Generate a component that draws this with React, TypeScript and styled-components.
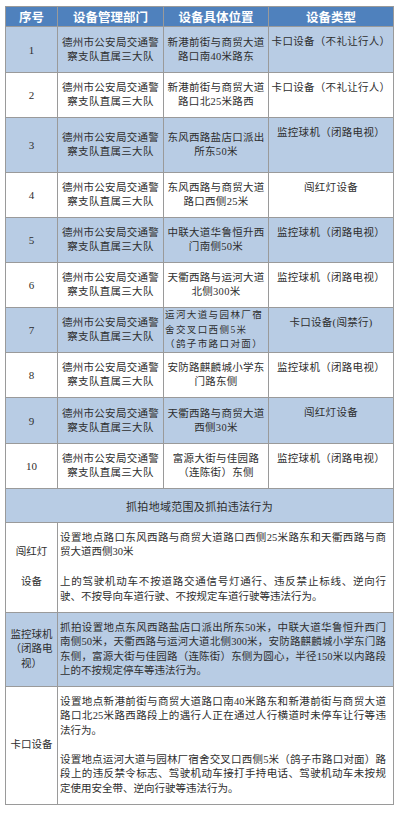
import React from 'react';
import styled, { createGlobalStyle } from 'styled-components';

const GlobalStyle = createGlobalStyle`
  html, body {
    margin: 0;
    padding: 0;
    background: #ffffff;
  }
`;

const Page = styled.div`
  padding: 6px 0 0 5px;
  width: 400px;
  box-sizing: border-box;
`;

const Table = styled.table`
  width: 388px;
  border-collapse: collapse;
  table-layout: fixed;
  font-family: "Liberation Serif", "Noto Sans CJK SC", serif;
  font-size: 10.5px;
  color: #2e2e2e;
  border: 1px solid #9a9a9a;
`;

const Col = styled.col<{ $w: number }>`
  width: ${p => p.$w}px;
`;

const HeadCell = styled.th`
  background: #4f81bd;
  color: #ffffff;
  font-family: "Noto Sans CJK SC", sans-serif;
  font-weight: 700;
  font-size: 12.5px;
  height: 19px;
  line-height: 18px;
  padding: 0;
  border: 1px solid #9a9a9a;
  text-align: center;
`;

const Row = styled.tr<{ $h: number; $shade: boolean }>`
  height: ${p => p.$h}px;
  background: ${p => (p.$shade ? '#b8cce4' : '#ffffff')};
`;

const Cell = styled.td<{ $top?: boolean }>`
  border: 1px solid #9a9a9a;
  padding: ${p => (p.$top ? '8px 0 0' : '0')};
  vertical-align: ${p => (p.$top ? 'top' : 'middle')};
  text-align: center;
  letter-spacing: 0.3px;
  white-space: nowrap;
  overflow: hidden;
`;

const NumCell = styled(Cell)`
  font-size: 11px;
  letter-spacing: 0;
`;

const CellLine = styled.div<{ $h: number }>`
  height: ${p => p.$h}px;
  line-height: ${p => p.$h}px;
`;

const TightText = styled.div`
  text-align: left;
  padding-left: 1px;
  font-size: 9.5px;
  letter-spacing: 1.4px;
`;

const Section = styled.td`
  border: 1px solid #9a9a9a;
  height: 33px;
  text-align: center;
  vertical-align: middle;
  padding: 0;
  font-size: 11px;
  letter-spacing: 0.3px;
`;

const SideCell = styled.td`
  border: 1px solid #9a9a9a;
  text-align: center;
  vertical-align: middle;
  padding: 0;
  font-size: 10.5px;
`;

const BodyCell = styled.td`
  border: 1px solid #9a9a9a;
  vertical-align: middle;
  padding: 0 7px 0 2px;
  font-size: 10.5px;
`;

const Line = styled.div<{ $full?: boolean; $h: number }>`
  height: ${p => p.$h}px;
  line-height: ${p => p.$h}px;
  text-align: ${p => (p.$full ? 'justify' : 'left')};
  text-align-last: ${p => (p.$full ? 'justify' : 'left')};
  white-space: nowrap;
`;

type Item = {
  no: string;
  loc: string[];
  type: string;
  h: number;
  tight?: boolean;
};

const items: Item[] = [
  { no: '1', loc: ['新港前街与商贸大道', '路口南40米路东'], type: '卡口设备（不礼让行人）', h: 46 },
  { no: '2', loc: ['新港前街与商贸大道', '路口北25米路西'], type: '卡口设备（不礼让行人）', h: 45 },
  { no: '3', loc: ['东风西路盐店口派出', '所东50米'], type: '监控球机（闭路电视）', h: 55 },
  { no: '4', loc: ['东风西路与商贸大道', '路口西侧25米'], type: '闯红灯设备', h: 45 },
  { no: '5', loc: ['中联大道华鲁恒升西', '门南侧50米'], type: '监控球机（闭路电视）', h: 45 },
  { no: '6', loc: ['天衢西路与运河大道', '北侧300米'], type: '监控球机（闭路电视）', h: 45 },
  {
    no: '7',
    loc: ['运河大道与园林厂宿', '舍交叉口西侧5米', '（鸽子市路口对面）'],
    type: '卡口设备(闯禁行)',
    h: 45,
    tight: true,
  },
  { no: '8', loc: ['安防路麒麟城小学东', '门路东侧'], type: '监控球机（闭路电视）', h: 45 },
  { no: '9', loc: ['天衢西路与商贸大道', '西侧30米'], type: '闯红灯设备', h: 46 },
  { no: '10', loc: ['富源大街与佳园路', '（连陈街）东侧'], type: '监控球机（闭路电视）', h: 45 },
];

const dept = ['德州市公安局交通警', '察支队直属三大队'];

type Rule = {
  side: string[];
  body: { text: string; full?: boolean }[];
  h: number;
  lh: number;
  shade: boolean;
};

const rules: Rule[] = [
  {
    side: ['闯红灯', '', '设备'],
    h: 90,
    lh: 14.8,
    shade: false,
    body: [
      { text: '设置地点路口东风西路与商贸大道路口西侧25米路东和天衢西路与商', full: true },
      { text: '贸大道西侧30米' },
      { text: '' },
      { text: '上的驾驶机动车不按道路交通信号灯通行、违反禁止标线、逆向行', full: true },
      { text: '驶、不按导向车道行驶、不按规定车道行驶等违法行为。' },
    ],
  },
  {
    side: ['监控球机', '（闭路电', '视）'],
    h: 74,
    lh: 14.3,
    shade: true,
    body: [
      { text: '抓拍设置地点东风西路盐店口派出所东50米，中联大道华鲁恒升西门', full: true },
      { text: '南侧50米，天衢西路与运河大道北侧300米，安防路麒麟城小学东门路', full: true },
      { text: '东侧，富源大街与佳园路（连陈街）东侧为圆心，半径150米以内路段', full: true },
      { text: '上的不按规定停车等违法行为。' },
    ],
  },
  {
    side: ['卡口设备'],
    h: 118,
    lh: 14.5,
    shade: false,
    body: [
      { text: '设置地点新港前街与商贸大道路口南40米路东和新港前街与商贸大道', full: true },
      { text: '路口北25米路西路段上的遇行人正在通过人行横道时未停车让行等违', full: true },
      { text: '法行为。' },
      { text: '' },
      { text: '设置地点运河大道与园林厂宿舍交叉口西侧5米（鸽子市路口对面）路', full: true },
      { text: '段上的违反禁令标志、驾驶机动车接打手持电话、驾驶机动车未按规', full: true },
      { text: '定使用安全带、逆向行驶等违法行为。' },
    ],
  },
];

const renderLines = (lines: string[], h: number) =>
  lines.map((l, i) => (
    <CellLine key={i} $h={h}>
      {l === '' ? '\u00a0' : l}
    </CellLine>
  ));

export default function App() {
  return (
    <Page>
      <GlobalStyle />
      <Table>
        <colgroup>
          <Col $w={52} />
          <Col $w={106} />
          <Col $w={105} />
          <Col $w={125} />
        </colgroup>
        <thead>
          <tr>
            <HeadCell>序号</HeadCell>
            <HeadCell>设备管理部门</HeadCell>
            <HeadCell>设备具体位置</HeadCell>
            <HeadCell>设备类型</HeadCell>
          </tr>
        </thead>
        <tbody>
          {items.map((it, idx) => (
            <Row key={it.no} $h={it.h} $shade={idx % 2 === 0}>
              <NumCell>{it.no}</NumCell>
              <Cell>{renderLines(dept, 14)}</Cell>
              <Cell>
                {it.tight ? (
                  <TightText>{renderLines(it.loc, 14.5)}</TightText>
                ) : (
                  renderLines(it.loc, 14)
                )}
              </Cell>
              <Cell $top>{renderLines([it.type], 14)}</Cell>
            </Row>
          ))}
          <Row $h={34} $shade={true}>
            <Section colSpan={4}>抓拍地域范围及抓拍违法行为</Section>
          </Row>
          {rules.map((r, i) => (
            <Row key={i} $h={r.h} $shade={r.shade}>
              <SideCell>{renderLines(r.side, r.lh)}</SideCell>
              <BodyCell colSpan={3}>
                {r.body.map((b, j) => (
                  <Line key={j} $full={b.full} $h={r.lh}>
                    {b.text === '' ? '\u00a0' : b.text}
                  </Line>
                ))}
              </BodyCell>
            </Row>
          ))}
        </tbody>
      </Table>
    </Page>
  );
}
